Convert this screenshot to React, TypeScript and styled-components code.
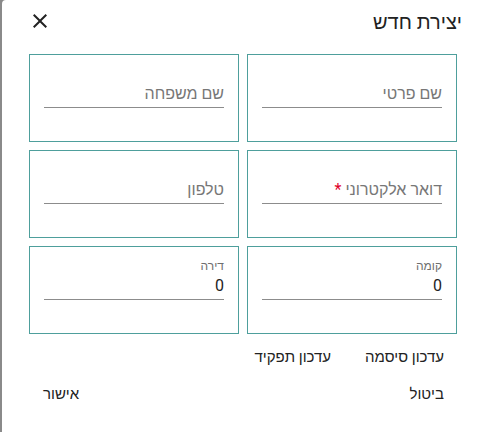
import React from "react";
import styled, { createGlobalStyle } from "styled-components";

const Global = createGlobalStyle`
  html, body { margin: 0; padding: 0; }
  body {
    background: #8a8a8a;
    font-family: Roboto, "Liberation Sans", Arial, sans-serif;
    width: 483px;
    height: 432px;
    overflow: hidden;
  }
`;

const Paper = styled.div`
  direction: rtl;
  margin-left: 2px;
  width: 481px;
  height: 432px;
  background: #fff;
  border-top-left-radius: 4px;
  box-sizing: border-box;
  display: flex;
  flex-direction: column;
`;

const TitleBar = styled.div`
  display: flex;
  align-items: center;
  justify-content: space-between;
  height: 42px;
  padding: 0 21px 0 26px;
  margin-bottom: 12px;
`;

const Title = styled.h2`
  margin: 0;
  font-size: 20px;
  font-weight: 400;
  line-height: 28px;
  color: #222;
  padding-top: 2px;
`;

const CloseButton = styled.button`
  width: 24px;
  height: 24px;
  padding: 0;
  border: none;
  background: none;
  color: #222;
  display: flex;
  align-items: center;
  justify-content: center;
`;

const Grid = styled.div`
  display: grid;
  grid-template-columns: 210px 210px;
  grid-auto-rows: 88px;
  gap: 8px;
  padding: 0 26px 0 27px;
  margin-bottom: 13px;
`;

const Box = styled.div`
  border: 1px solid #4e9f9c;
  box-sizing: border-box;
  padding: 12px 14px 0 14px;
`;

const Field = styled.div`
  border-bottom: 1px solid #8c8c8c;
  display: flex;
  flex-direction: column;
`;

const SmallLabel = styled.div`
  height: 15px;
  font-size: 12px;
  line-height: 15px;
  color: #6e6e6e;
`;

const InputLine = styled.div<{ $placeholder?: boolean }>`
  height: 23px;
  line-height: 23px;
  margin-bottom: 2px;
  font-size: 16px;
  color: ${(p) => (p.$placeholder ? "#777" : "#222")};
`;

const Star = styled.span`
  color: #e0002a;
  margin-right: 4px;
`;

const ActionsRow = styled.div<{ $spread?: boolean }>`
  display: flex;
  justify-content: ${(p) => (p.$spread ? "space-between" : "flex-start")};
  gap: 34px;
  padding: 0 39px 0 41px;
  margin-bottom: ${(p) => (p.$spread ? "0" : "17px")};
`;

const TextButton = styled.button`
  border: none;
  background: none;
  padding: 0;
  font-family: Roboto, "Liberation Sans", Arial, sans-serif;
  font-size: 15px;
  line-height: 20px;
  color: #222;
`;

type F = { label: string; value?: string; required?: boolean };

const fields: F[] = [
  { label: "שם פרטי" },
  { label: "שם משפחה" },
  { label: "דואר אלקטרוני", required: true },
  { label: "טלפון" },
  { label: "קומה", value: "0" },
  { label: "דירה", value: "0" },
];

export default function App() {
  return (
    <>
      <Global />
      <Paper>
        <TitleBar>
          <Title>יצירת חדש</Title>
          <CloseButton aria-label="close">
            <svg width="24" height="24" viewBox="0 0 24 24" fill="currentColor">
              <path d="M19 6.41 17.59 5 12 10.59 6.41 5 5 6.41 10.59 12 5 17.59 6.41 19 12 13.41 17.59 19 19 17.59 13.41 12z" />
            </svg>
          </CloseButton>
        </TitleBar>
        <Grid>
          {fields.map((f) => (
            <Box key={f.label}>
              <Field>
                <SmallLabel>{f.value !== undefined ? f.label : ""}</SmallLabel>
                {f.value !== undefined ? (
                  <InputLine>{f.value}</InputLine>
                ) : (
                  <InputLine $placeholder>
                    {f.label}
                    {f.required && <Star>*</Star>}
                  </InputLine>
                )}
              </Field>
            </Box>
          ))}
        </Grid>
        <ActionsRow>
          <TextButton>עדכון סיסמה</TextButton>
          <TextButton>עדכון תפקיד</TextButton>
        </ActionsRow>
        <ActionsRow $spread>
          <TextButton>ביטול</TextButton>
          <TextButton>אישור</TextButton>
        </ActionsRow>
      </Paper>
    </>
  );
}
